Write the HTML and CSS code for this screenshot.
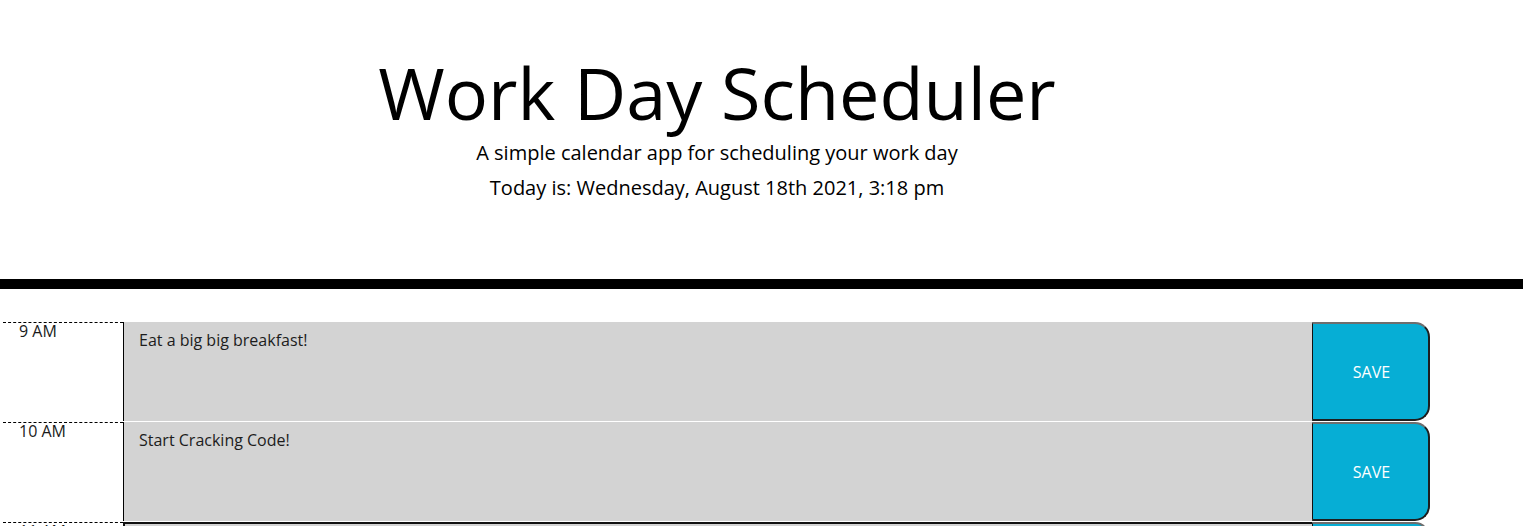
FILE: index.html
```html
<!DOCTYPE html>
<html lang="en">
<head>
<meta charset="utf-8">
<title>Work Day Scheduler</title>
<link rel="stylesheet" href="styles.css">
</head>
<body>
<header class="jumbotron">
  <div class="jumbo-inner">
    <h1 class="display">Work Day Scheduler</h1>
    <p class="lead">A simple calendar app for scheduling your work day</p>
    <p class="lead today">Today is: Wednesday, August 18th 2021, 3:18 pm</p>
  </div>
</header>
<main class="schedule">
  <div class="row">
    <div class="hour">9 AM</div>
    <textarea class="description past">Eat a big big breakfast!</textarea>
    <button class="saveBtn">SAVE</button>
  </div>
  <div class="row">
    <div class="hour">10 AM</div>
    <textarea class="description past">Start Cracking Code!</textarea>
    <button class="saveBtn">SAVE</button>
  </div>
  <div class="row">
    <div class="hour">11 AM</div>
    <textarea class="description past bordered"></textarea>
    <button class="saveBtn">SAVE</button>
  </div>
  <div class="row">
    <div class="hour">12 PM</div>
    <textarea class="description past bordered"></textarea>
    <button class="saveBtn">SAVE</button>
  </div>
</main>
</body>
</html>
```
FILE: styles.css
```css
html, body {
  margin: 0;
  padding: 0;
  background: #ffffff;
}
body {
  font-family: "Open Sans", "Liberation Sans", sans-serif;
  font-size: 16px;
  color: #000;
  overflow: hidden;
}
.jumbotron {
  height: 279px;
  border-bottom: 10px solid #000;
}
.jumbo-inner {
  width: 1434px;
  text-align: center;
  padding-top: 49px;
}
.display {
  margin: 0;
  font-size: 72px;
  font-weight: 400;
  line-height: 1.2;
}
.lead {
  margin: 3px 0 0;
  font-size: 20px;
  line-height: 30px;
}
.today {
  margin-top: 5px;
}
.schedule {
  width: 1427px;
  margin-top: 32px;
  padding-left: 3px;
}
.row {
  display: flex;
  box-sizing: border-box;
  height: 100px;
  border-top: 1px solid #fff;
}
.hour {
  width: 120px;
  box-sizing: border-box;
  border-top: 1px dashed #000;
  padding-left: 16px;
  line-height: 1;
  font-size: 16px;
  color: #1a1a1a;
}
.description {
  flex: 1;
  box-sizing: border-box;
  margin: 0;
  border: none;
  border-left: 1px solid #000;
  background: #d3d3d3;
  color: #1c1c1c;
  font-family: "Open Sans", "Liberation Sans", sans-serif;
  font-size: 16px;
  line-height: 1.362;
  padding: 8px 15px;
  resize: none;
  outline: none;
}
.description.bordered {
  border-top: 2px solid #111;
  border-left: 2px solid #111;
}
.saveBtn {
  width: 118px;
  box-sizing: border-box;
  margin: 0;
  background: #06aed5;
  color: #fff;
  font-family: "Open Sans", "Liberation Sans", sans-serif;
  font-size: 16px;
  border-style: solid;
  border-width: 2px 2px 2px 1px;
  border-color: #6e6e6e #1e1e1e #1e1e1e #111;
  border-radius: 0 15px 15px 0;
  padding: 0 0 0 2px;
}
```
